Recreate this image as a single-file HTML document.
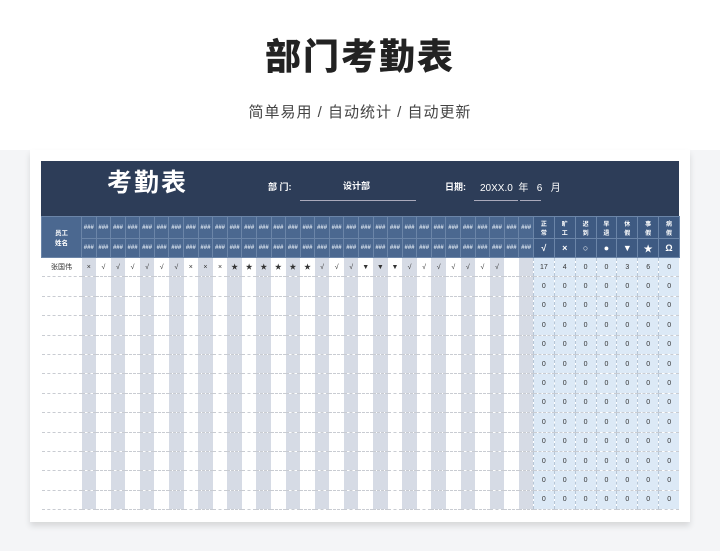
<!DOCTYPE html><html><head><meta charset="utf-8"><style>
*{margin:0;padding:0;box-sizing:border-box}
body{width:720px;height:551px;background:#f4f5f7;font-family:"Liberation Sans","Noto Sans CJK SC",sans-serif;position:relative;overflow:hidden}
.top{position:absolute;left:0;top:0;width:720px;height:150px;background:#fff}
h1{position:absolute;top:28px;width:720px;text-align:center;font-size:36px;font-weight:900;color:#222;letter-spacing:2px}
.sub{position:absolute;top:101px;width:720px;text-align:center;font-size:15px;color:#444;letter-spacing:1px}
.card{position:absolute;left:30px;top:150px;width:660px;height:372px;background:#fff;box-shadow:0 4px 6px rgba(0,0,0,.12)}
.band{position:absolute;left:41px;top:161px;width:638px;height:55px;background:#2d3d58;color:#fff}
table{position:absolute;left:41px;top:216px;border-collapse:collapse;table-layout:fixed;width:638px}
td{font-size:7px;text-align:center;overflow:hidden;white-space:nowrap;padding:0;color:#333}
.h td{background:#4b6890;color:#d8e2ee;border:1px solid #6b85a8;font-size:6px;font-weight:bold}
.h td.s{background:#3e5a82;color:#fff}
.r td{height:19.4px;border-bottom:1px dashed #c9ccd2}
.g{background:#d6dbe5}
.sm{background:#dce9f6;border-left:1px dashed #b7c6d6}
</style></head><body>
<div class="top"></div>
<h1>部门考勤表</h1>
<div class="sub">简单易用 / 自动统计 / 自动更新</div>
<div class="card"></div>
<div class="band">
<div style="position:absolute;left:66px;top:2px;font-size:25px;font-weight:bold;letter-spacing:2px">考勤表</div>
<div style="position:absolute;left:227px;top:19px;font-size:9px;font-weight:bold">部 门:</div>
<div style="position:absolute;left:302px;top:18px;font-size:9px;font-weight:bold">设计部</div>
<div style="position:absolute;left:259px;top:39px;width:116px;border-top:1px solid #aab"></div>
<div style="position:absolute;left:404px;top:19px;font-size:9px;font-weight:bold">日期:</div>
<div style="position:absolute;left:439px;top:18px;font-size:10px">20XX.0 &nbsp;年 &nbsp; 6 &nbsp; 月</div>
<div style="position:absolute;left:433px;top:39px;width:44px;border-top:1px solid #aab"></div>
<div style="position:absolute;left:479px;top:39px;width:21px;border-top:1px solid #aab"></div>
</div>
<table id="t">
<colgroup><col style="width:40px"></colgroup>
</table>
<script>
var t=document.getElementById('t'),cg=t.querySelector('colgroup');
for(var i=0;i<31;i++)cg.innerHTML+='<col style="width:14.58px">';
for(var i=0;i<7;i++)cg.innerHTML+='<col style="width:20.86px">';
var lab=[['正','常','√'],['旷','工','×'],['迟','到','○'],['早','退','●'],['休','假','▼'],['事','假','★'],['病','假','Ω']];
var h1='<tr class="h" style="height:22px"><td rowspan="2" style="font-size:6.5px;color:#fff">员工<br>姓名</td>',h2='<tr class="h" style="height:19px">';
for(var i=0;i<31;i++){h1+='<td>###</td>';h2+='<td>###</td>';}
lab.forEach(function(l){h1+='<td class="s">'+l[0]+'<br>'+l[1]+'</td>';h2+='<td class="s" style="font-size:9px">'+l[2]+'</td>';});
var rows=h1+'</tr>'+h2+'</tr>';
var d='×√√√√√√×××★★★★★★√√√▼▼▼√√√√√√√  '.split('');
var sums=[17,4,0,0,3,6,0];
for(var r=0;r<13;r++){rows+='<tr class="r"><td style="font-size:7px">'+(r==0?'张国伟':'')+'</td>';
for(var i=0;i<31;i++)rows+='<td class="'+(i%2==0?'g':'')+'">'+(r==0&&d[i]!=' '?d[i]:'')+'</td>';
for(var i=0;i<7;i++)rows+='<td class="sm">'+(r==0?sums[i]:0)+'</td>';
rows+='</tr>';}
t.innerHTML+=rows;
</script>
</body></html>
